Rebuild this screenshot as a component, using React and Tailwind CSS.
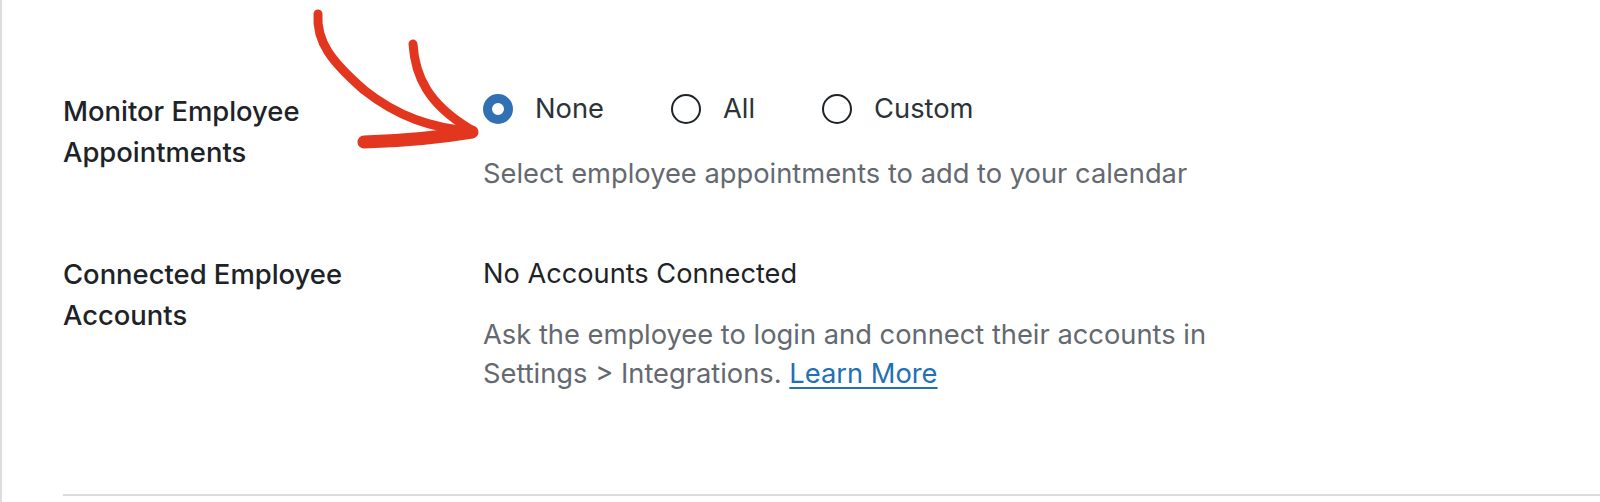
import React, { useState } from "react";

const options = [
    { id: "none", label: "None" },
    { id: "all", label: "All" },
    { id: "custom", label: "Custom" },
];

const Radio = ({ checked }) =>
    checked ? (
        <span className="w-[30px] h-[30px] rounded-full border-[9px] border-[#3070b3] bg-white shrink-0" />
    ) : (
        <span className="w-[30px] h-[30px] rounded-full border-2 border-[#1d2327] bg-white shrink-0" />
    );

const App = () => {
    const [selected, setSelected] = useState("none");

    return (
        <div className="relative min-h-[502px] bg-white border-l-2 border-[#dcdcde] font-['Inter',sans-serif] overflow-hidden">
            {/* Annotation arrow */}
            <svg
                className="absolute left-0 top-0 pointer-events-none"
                width="500"
                height="160"
                viewBox="0 0 500 160"
                fill="none"
            >
                <path
                    d="M316 14 C314 42, 330 62, 362 90 C396 117, 430 128, 468 131"
                    stroke="#e2361e"
                    strokeWidth="9"
                    strokeLinecap="round"
                />
                <path
                    d="M411 44 C413 76, 426 104, 468 129"
                    stroke="#e2361e"
                    strokeWidth="9"
                    strokeLinecap="round"
                />
                <path
                    d="M362 142 C400 141, 440 137, 470 132"
                    stroke="#e2361e"
                    strokeWidth="13"
                    strokeLinecap="round"
                />
            </svg>

            <div className="pl-[61px] pt-[91px]">
                {/* Row 1 */}
                <div className="grid grid-cols-[420px_1fr]">
                    <div className="text-[27.4px] leading-[41px] font-medium text-[#1d2327]">
                        Monitor Employee
                        <br />
                        Appointments
                    </div>
                    <div className="pt-[3px]">
                        <div className="flex items-center h-[30px]">
                            {options.map((opt, i) => (
                                <label
                                    key={opt.id}
                                    onClick={() => setSelected(opt.id)}
                                    className={`flex items-center gap-[22px] cursor-pointer ${i > 0 ? "ml-[67px]" : ""}`}
                                >
                                    <Radio checked={selected === opt.id} />
                                    <span className="text-[27.3px] leading-[30px] text-[#2c3338]">{opt.label}</span>
                                </label>
                            ))}
                        </div>
                        <p className="mt-[30px] text-[27.3px] leading-[40px] text-[#646970]">
                            Select employee appointments to add to your calendar
                        </p>
                    </div>
                </div>

                {/* Row 2 */}
                <div className="grid grid-cols-[420px_1fr] mt-[60px]">
                    <div className="text-[27.4px] leading-[41px] font-medium text-[#1d2327]">
                        Connected Employee
                        <br />
                        Accounts
                    </div>
                    <div>
                        <p className="text-[27.2px] leading-[40px] text-[#1d2327]">No Accounts Connected</p>
                        <p className="mt-[21px] text-[27.3px] leading-[39px] text-[#646970] max-w-[760px]">
                            Ask the employee to login and connect their accounts in
                            <br />
                            Settings &gt; Integrations.{" "}
                            <a href="#" className="text-[#2271b1] underline underline-offset-[4px]">
                                Learn More
                            </a>
                        </p>
                    </div>
                </div>

                <div className="mt-[101px] h-[2px] bg-[#dcdcde]" />
            </div>
        </div>
    );
};

export default App;
